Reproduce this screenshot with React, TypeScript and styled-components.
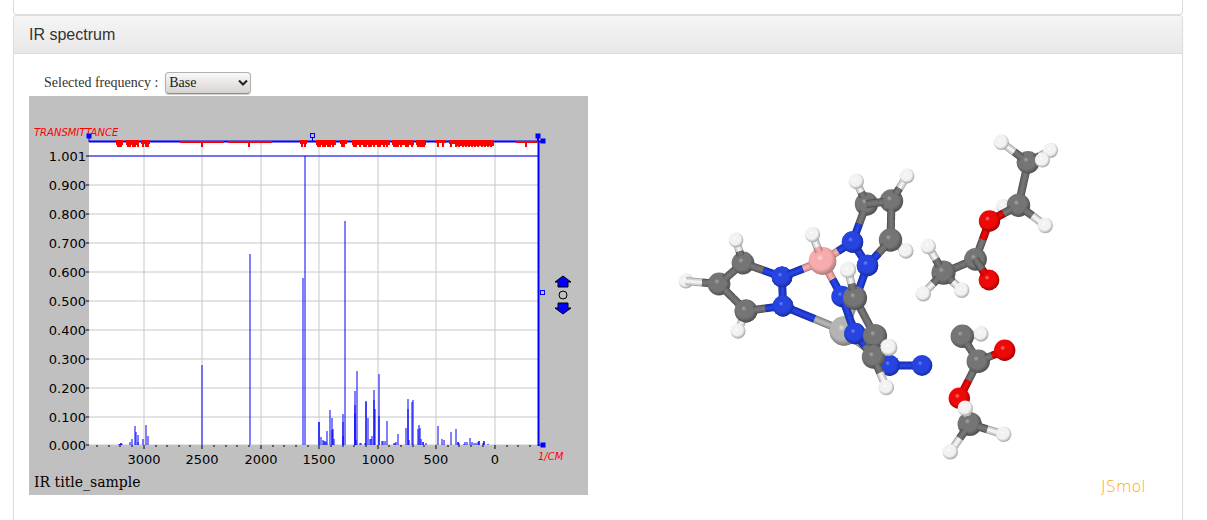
import React from "react";
import styled, { createGlobalStyle } from "styled-components";

const GlobalStyle = createGlobalStyle`
  *, *::before, *::after { box-sizing: border-box; }
  body {
    margin: 0;
    background: #fff;
    color: #333;
    font-family: "Liberation Serif", "Times New Roman", serif;
    font-size: 14px;
    line-height: 22px;
  }
`;

const Page = styled.main`
  display: flex;
  flex-direction: column;
  height: 100vh;
  overflow: hidden;
  padding: 0 24px 0 13px;
`;

const PreviousPanel = styled.section`
  flex: none;
  height: 15px;
  border: 1px solid #ddd;
  border-top: 0;
  border-radius: 0 0 4px 4px;
  box-shadow: 0 1px 1px rgba(0, 0, 0, 0.05);
`;

const Panel = styled.section`
  flex: 1 0 auto;
  border: 1px solid #ddd;
  border-bottom: 0;
  border-radius: 4px 4px 0 0;
  box-shadow: 0 1px 2px rgba(0, 0, 0, 0.05);
`;

const PanelHeading = styled.header`
  padding: 9px 15px 8px;
  border-bottom: 1px solid #ddd;
  border-radius: 3px 3px 0 0;
  background: linear-gradient(to bottom, #f5f5f5, #e8e8e8);
`;

const PanelTitle = styled.h3`
  margin: 0;
  font: 400 16px/20px "Liberation Sans", Arial, sans-serif;
`;

const PanelBody = styled.div`
  padding: 18px 15px 15px;
`;

const FrequencyRow = styled.div`
  display: flex;
  align-items: flex-start;
  gap: 7px;
  height: 24px;
  padding-left: 15px;
`;

const SelectBox = styled.span`
  display: inline-grid;
  align-items: center;
`;

const FrequencySelect = styled.select`
  grid-area: 1 / 1;
  appearance: none;
  width: 86px;
  height: 22px;
  margin: 0;
  padding: 0 20px 0 3px;
  border: 1px solid #b4b0ad;
  border-bottom-color: #8f8c89;
  border-radius: 4px;
  background: linear-gradient(to bottom, #f9f8f8, #e9e6e4 50%, #d7d2cf);
  box-shadow: 0 1px 1px rgba(0, 0, 0, 0.2);
  color: #1a1a1a;
  font: 14px/20px "Liberation Serif", "Times New Roman", serif;
`;

const Chevron = styled.svg`
  grid-area: 1 / 1;
  justify-self: end;
  margin-right: 3px;
  pointer-events: none;
`;

const Viewers = styled.div`
  display: grid;
  grid-template-columns: 1fr 1fr;
`;

const Drawing = styled.svg`
  display: block;
  width: 559px;
  height: 399px;
`;

const AxisText = styled.text`
  font: 13px "DejaVu Sans", sans-serif;
  fill: #000;
`;

const UnitText = styled.text`
  font: italic 10px "DejaVu Sans", sans-serif;
  fill: #f00;
`;

const TitleText = styled.text`
  font: 14px "DejaVu Serif", serif;
  fill: #000;
`;

const BrandText = styled.text`
  font: 200 16px "DejaVu Sans", sans-serif;
  fill: #ffa500;
`;

/* ---------- spectrum ---------- */

const AXIS_Y = 445;

// x position and top of every absorption line
const PEAKS: [number, number][] = [
  [119, 444], [120, 444], [121, 443], [121, 443], [122, 444], [130, 442], [132, 439], [135, 426], [136, 432],
  [138, 435], [138, 442], [143, 439], [146, 425], [148, 436], [202, 365], [250, 254], [303, 278], [305, 156],
  [319, 422], [319, 422], [321, 437], [323, 440], [324, 441], [325, 441], [326, 442], [327, 431], [330, 410],
  [332, 418], [332, 430], [333, 429], [334, 439], [343, 414], [343, 422], [343, 436], [345, 221],
  [355, 391], [355, 405], [355, 413], [356, 440], [357, 371], [360, 443], [361, 443], [365, 443],
  [366, 401], [366, 402], [368, 418], [370, 439], [371, 439], [372, 436], [374, 390], [374, 400], [375, 409],
  [379, 374], [379, 416], [382, 441], [383, 441], [385, 441], [387, 421], [394, 443], [395, 443], [396, 442],
  [398, 434], [406, 428], [408, 399], [408, 409], [409, 440], [412, 402], [413, 400], [418, 429], [419, 425],
  [420, 428], [421, 439], [423, 442], [423, 442], [426, 443], [438, 426], [442, 439], [444, 440], [451, 432],
  [456, 429], [458, 442], [458, 442], [459, 443], [464, 444], [465, 442], [467, 442], [470, 438], [472, 442],
  [474, 443], [476, 443], [478, 442], [479, 441], [479, 441], [483, 443], [484, 441], [484, 441], [488, 444],
];

const Y_TICKS = [
  [156, "1.001"], [185, "0.900"], [214, "0.800"], [243, "0.700"], [272, "0.600"], [301, "0.500"],
  [330, "0.400"], [359, "0.300"], [388, "0.200"], [417, "0.100"], [445, "0.000"],
] as const;

const X_TICKS = [
  [144, "3000"], [202, "2500"], [261, "2000"], [319, "1500"], [378, "1000"], [436, "500"], [495, "0"],
] as const;

const MINOR_TICKS = [97, 109, 120, 132, 156, 167, 179, 190, 214, 226, 237, 249, 273, 284, 296, 308, 331, 343, 354,
  366, 389, 401, 413, 424, 448, 459, 471, 483, 507, 518, 530];

// red integration bands: start, end, thickness
const BANDS = [
  [116, 123, 5], [126, 139, 5], [141, 150, 4], [180, 224, 2], [228, 272, 2], [300, 307, 4], [316, 336, 5],
  [340, 347, 4], [352, 390, 5], [392, 414, 5], [416, 426, 5], [436, 446, 3], [449, 494, 4], [455, 494, 6],
  [516, 538, 2],
];

const BAND_TICKS = [118, 120, 121, 128, 130, 133, 135, 138, 143, 146, 148, 202, 249, 302, 305, 318, 320,
  323, 325, 328, 330, 333, 342, 344, 354, 356, 360, 364, 366, 369, 371, 374, 378, 380, 384, 387,
  394, 396, 398, 401, 406, 408, 412, 418, 420, 422, 424, 438, 443, 451, 456, 459, 463, 466, 469,
  472, 475, 478, 482, 485, 488, 491, 526];

function Handle({ x, y, open }: { x: number; y: number; open?: boolean }) {
  return <rect x={x - 2} y={y - 2} width="4" height="4"
    fill={open ? "none" : "#00f"} stroke="#00f" strokeWidth={1} />;
}

function Spectrum() {
  return (
    <Drawing viewBox="29 96 559 399" role="img" aria-label="IR spectrum, transmittance against wavenumber">
      <rect x="29" y="96" width="559" height="399" fill="#c0c0c0" />
      <rect x="89" y="141" width="450" height="304" fill="#fff" />
      <g stroke="#c8c8c8">
        {X_TICKS.map(([x]) => <line key={x} x1={x} x2={x} y1="142" y2={AXIS_Y} />)}
        {Y_TICKS.map(([y]) => <line key={y} x1="89" x2="538" y1={y} y2={y} />)}
      </g>
      <g stroke="#606060" strokeWidth="2">
        {Y_TICKS.map(([y]) => <line key={y} x1="86" x2="89" y1={y} y2={y} />)}
        {X_TICKS.map(([x]) => <line key={x} x1={x} x2={x} y1="445" y2="449" />)}
        {MINOR_TICKS.map((x) => <line key={x} x1={x} x2={x} y1="445" y2="447" />)}
      </g>
      <g stroke="#00f">
        {PEAKS.map(([x, y], i) => <line key={i} x1={x} x2={x} y1={y} y2={AXIS_Y} />)}
        <line x1="89" x2="538" y1="156" y2="156" />
        <line x1="89" x2="543" y1="141.500" y2="141.500" strokeWidth="2" />
        <line x1="538.500" x2="538.500" y1="141" y2="446" strokeWidth="2" />
        <line x1="89" x2="89" y1="136" y2="142" />
        <line x1="538" x2="538" y1="136" y2="142" strokeWidth="2" />
        <line x1="312.500" x2="312.500" y1="137" y2="141" />
        <line x1="538" x2="543" y1="445" y2="445" />
      </g>
      <g fill="#f00">
        {BANDS.map(([a, b, h]) => <rect key={a} x={a} y={h > 2 ? 140 : 141} width={b - a} height={h} />)}
      </g>
      <g stroke="#f00" strokeWidth="2">
        {BAND_TICKS.map((x) => <line key={x} x1={x} x2={x} y1="141" y2="147" />)}
      </g>
      {Y_TICKS.map(([y, t]) => <AxisText key={t} x="86" y={y + 5} textAnchor="end">{t}</AxisText>)}
      {X_TICKS.map(([x, t]) => <AxisText key={t} x={x} y="464" textAnchor="middle">{t}</AxisText>)}
      <UnitText x="34" y="136">TRANSMITTANCE</UnitText>
      <UnitText x="538" y="460">1/CM</UnitText>
      <TitleText x="34" y="487">IR title_sample</TitleText>
      <Handle x={89} y={136} />
      <Handle x={538} y={136} />
      <Handle x={543} y={141} />
      <Handle x={543} y={445} />
      <Handle x={312.5} y={135.5} open />
      <Handle x={542.5} y={292.5} open />
      <g fill="#00f" stroke="#000">
        <path d="M563 276l8 6h-3v5h-10v-5h-3z" />
        <path d="M563 314l8-6h-3v-5h-10v5h-3z" />
        <circle cx="563" cy="295" r="4" fill="none" />
      </g>
    </Drawing>
  );
}

/* ---------- molecule ---------- */

type Element = "C" | "H" | "N" | "O" | "B" | "M";
type Atom = [Element, number, number, number];

const SHADES: Record<Element, [string, string, string, string]> = {
  // highlight, body, rim, bond
  C: ["#a8a8a8", "#757575", "#4a4a4a", "#686868"],
  H: ["#ffffff", "#f2f2f2", "#9c9c9c", "#d2d2d2"],
  N: ["#7089ff", "#2744e0", "#162a98", "#1c36cc"],
  O: ["#ff8080", "#ee0808", "#900000", "#cc0606"],
  B: ["#ffd8d8", "#f6acac", "#a07070", "#e09a9a"],
  M: ["#e0e0e0", "#b4b4b4", "#767676", "#9c9c9c"],
};

const ATOMS: Record<string, Atom> = {
  h1: ["H", 736, 240, 7], c1: ["C", 743, 263, 11], c2: ["C", 719, 284, 11], h2: ["H", 686, 281, 7],
  c3: ["C", 746, 311, 11], h3: ["H", 738, 331, 7], n1: ["N", 782, 277, 10], n2: ["N", 783, 306, 10],
  b: ["B", 822.5, 261, 13.5], hb: ["H", 812.5, 234.5, 7.3],
  h4: ["H", 856.3, 181.3, 7.3], c4: ["C", 866.5, 204, 11.3], c5: ["C", 891.5, 201, 11.3], h5: ["H", 907, 176, 7],
  c6: ["C", 890.5, 240, 11.3], h6: ["H", 906, 251, 7], n3: ["N", 852.5, 242, 10.3], n4: ["N", 867.5, 265.5, 10.3],
  h7: ["H", 848, 270, 7.8], c7: ["C", 855, 298, 11.7], n5: ["N", 842, 296.5, 10.3], m: ["M", 844, 331, 14],
  n6: ["N", 855, 333.5, 10.3], c8: ["C", 875, 336, 11.7], c9: ["C", 873.5, 357, 11.3], h8: ["H", 889, 347.5, 8],
  h9: ["H", 886.3, 387.5, 7.4], n7: ["N", 889.5, 365.5, 10], n8: ["N", 922, 365.5, 10],
  h10: ["H", 1001.3, 142.3, 7.3], c10: ["C", 1028, 162.3, 11], h11: ["H", 1050.5, 150.3, 7.2],
  h12: ["H", 1042.5, 160, 7.2], c11: ["C", 1018.5, 205.3, 11.3], h13: ["H", 1003, 206, 6.5],
  h14: ["H", 1045.3, 225.5, 7.3], o1: ["O", 989.5, 221, 10.3], c12: ["C", 975.5, 259.3, 11],
  o2: ["O", 989, 280, 10], c13: ["C", 943.5, 272.7, 11.7], h15: ["H", 928.3, 246.5, 7.3],
  h16: ["H", 923.3, 293.7, 7.3], h17: ["H", 961.7, 290.3, 7.3],
  c14: ["C", 962.3, 336.3, 11.3], h18: ["H", 981, 334, 7], c15: ["C", 978.3, 361.3, 11.3],
  o3: ["O", 1004.7, 350.3, 10.3], o4: ["O", 959.3, 398.3, 10.3], h19: ["H", 965.3, 408.3, 7.3],
  c16: ["C", 969.7, 424, 11.7], h20: ["H", 1003.7, 434.3, 7.3], h21: ["H", 950.3, 451.7, 7.3],
};

// Back to front. "a-b" is a bond that leaves the surface of a; a single name is an atom.
const SCENE = `
  c3 c3-h3 h3 h2 c2-h2 c2 c2-c3 c3 h3 c2-c1 c1 c1-h1 h1 n1 c1-n1 n1 n2 c3-n2 n1-n2 n2 n1
  m n2-m n2 m-n7 m n7 n7-n8 n7 n8
  c5 c4 c5-c4 c5-h5 h5 h6 c6-h6 h6 c5-c6 c6 c4-h4 h4 c4-n3 c6-n4 n4-m n4 n3-n4 n3
  m n1-b b-n3 b-n5 b b-hb hb n3 n4 n5 n5-n6 n6 n6-c9 n6 c7-c8 c8 c8-c9 c9 c9-h9 h9 c8-h8 h8 c7 c7-h7 h7
  h13 c11-o1 c11-c10 c11 c10 c10-h10 h10 c10-h11 h11 c10-h12 h12 c11-h14 h14 c11-o1
  c12-o1 o1 o2 c13-c12 c13 c12 o2-c12 c13-h15 h15 c13-h16 h16 c13-h17 h17
  h18 c14-h18 h18 c14 c14-c15 c15-o4 o4 c15 c15-o3 o3 c16 c16-h20 h20 c16-h21 h21 c16-h19 h19
`.trim().split(/\s+/);

function Ball({ atom: [kind, x, y, r] }: { atom: Atom }) {
  return <circle cx={x} cy={y} r={r + 0.4} fill={`url(#ball-${kind})`} />;
}

function Bond({ from, to }: { from: Atom; to: Atom }) {
  const [ka, xa, ya, ra] = from;
  const [kb, xb, yb] = to;
  const dx = xb - xa;
  const dy = yb - ya;
  const length = Math.hypot(dx, dy);
  const start = (ra * 0.72) / length;
  const middle = 0.52;
  const x0 = xa + dx * start;
  const y0 = ya + dy * start;
  const xm = xa + dx * middle;
  const ym = ya + dy * middle;
  const half = (kind: Element, x1: number, y1: number, x2: number, y2: number) => (
    <>
      <line x1={x1} y1={y1} x2={x2} y2={y2} stroke={SHADES[kind][2]} strokeWidth="8" />
      <line x1={x1} y1={y1} x2={x2} y2={y2} stroke={SHADES[kind][3]} strokeWidth="6.500" />
      <line x1={x1} y1={y1} x2={x2} y2={y2} stroke={SHADES[kind][1]} strokeWidth="3" />
    </>
  );
  return (
    <g>
      {half(ka, x0, y0, xm, ym)}
      {half(kb, xm, ym, xb, yb)}
    </g>
  );
}

function Molecule() {
  return (
    <Drawing viewBox="598 96 559 399" role="img" aria-label="3D model of the molecule">
      <defs>
        {(Object.keys(SHADES) as Element[]).map((kind) => (
          <radialGradient key={kind} id={`ball-${kind}`} cx="0.45" cy="0.43" r="0.6" fx="0.4" fy="0.38">
            <stop offset="0" stopColor={SHADES[kind][0]} />
            <stop offset="0.2" stopColor={SHADES[kind][1]} />
            <stop offset="0.65" stopColor={SHADES[kind][1]} />
            <stop offset="1" stopColor={SHADES[kind][2]} />
          </radialGradient>
        ))}
      </defs>
      {SCENE.map((item, i) => {
        const [a, b] = item.split("-");
        return b ? <Bond key={i} from={ATOMS[a]} to={ATOMS[b]} /> : <Ball key={i} atom={ATOMS[a]} />;
      })}
      <BrandText x="1101" y="492">JSmol</BrandText>
    </Drawing>
  );
}

export default function App() {
  return (
    <>
      <GlobalStyle />
      <Page>
        <PreviousPanel />
        <Panel>
          <PanelHeading>
            <PanelTitle>IR spectrum</PanelTitle>
          </PanelHeading>
          <PanelBody>
            <FrequencyRow>
              <label htmlFor="frequency">Selected frequency :</label>
              <SelectBox>
                <FrequencySelect id="frequency" defaultValue="Base">
                  <option>Base</option>
                </FrequencySelect>
                <Chevron width="10" height="8" viewBox="0 0 10 8" fill="none" stroke="#222" strokeWidth="2" aria-hidden="true">
                  <path d="M1 1.500l4 4 4-4" />
                </Chevron>
              </SelectBox>
            </FrequencyRow>
            <Viewers>
              <Spectrum />
              <Molecule />
            </Viewers>
          </PanelBody>
        </Panel>
      </Page>
    </>
  );
}
